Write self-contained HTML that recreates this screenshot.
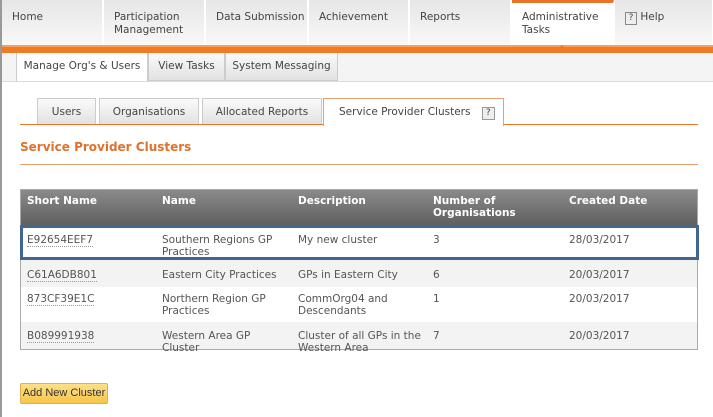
<!DOCTYPE html>
<html><head><style>
*{margin:0;padding:0;box-sizing:border-box}
body{width:713px;height:417px;overflow:hidden;background:#fff;font-family:"DejaVu Sans","Liberation Sans",sans-serif;font-size:10.5px;color:#555;position:relative}
.a{position:absolute}
.nav{top:0;height:45px;background:linear-gradient(#e6e6e6,#f8f8f8);border-right:1px solid #fff}
.nav span{position:absolute;left:10px;top:11px;line-height:13px;color:#444}
.tab{height:28px;background:linear-gradient(#fafafa,#e2e2e2);border:1px solid #ccc;color:#444;text-align:center;line-height:26px}
td,th{text-align:left;vertical-align:top;padding:0 6px}
</style></head><body>
<div class="a" style="left:0;top:0;width:2px;height:417px;background:#999"></div>
<div class="a nav" style="left:2px;width:101px"><span>Home</span></div>
<div class="a nav" style="left:104px;width:101px"><span>Participation<br>Management</span></div>
<div class="a nav" style="left:206px;width:102px"><span>Data Submission</span></div>
<div class="a nav" style="left:309px;width:100px"><span>Achievement</span></div>
<div class="a nav" style="left:410px;width:101px"><span>Reports</span></div>
<div class="a nav" style="left:512px;width:102px;background:#fff;border-top:3px solid #e8752a"><span style="top:8px">Administrative<br>Tasks</span></div>
<div class="a nav" style="left:615px;width:98px"><span style="top:11px"><span style="position:static;display:inline-block;border:1px solid #888;width:12px;height:13px;line-height:11px;text-align:center;font-size:9px">?</span> Help</span></div>
<div class="a" style="left:2px;top:45px;width:711px;height:8px;background:#f07b22;border-top:2px solid #f5a060"></div>
<div class="a" style="left:557px;top:40px;width:0;height:0;border:5px solid transparent;border-bottom-color:#f07b22"></div>
<div class="a" style="left:78px;top:53px;width:0;height:0;border:5px solid transparent;border-top-color:#f07b22"></div>
<div class="a" style="left:2px;top:53px;width:711px;height:29px;background:#f4f4f4;border-bottom:1px solid #ddd"></div>
<div class="a tab" style="left:16px;top:53px;width:132px;background:#fff;border-top:none;border-bottom:none">Manage Org's &amp; Users</div>
<div class="a tab" style="left:148px;top:53px;width:77px;border-top:none">View Tasks</div>
<div class="a tab" style="left:225px;top:53px;width:113px;border-top:none">System Messaging</div>
<div class="a tab" style="left:37px;top:98px;width:59px;height:27px">Users</div>
<div class="a tab" style="left:99px;top:98px;width:100px;height:27px">Organisations</div>
<div class="a tab" style="left:202px;top:98px;width:120px;height:27px">Allocated Reports</div>
<div class="a" style="left:20px;top:124px;width:678px;height:1px;background:#e8752a"></div>
<div class="a" style="left:323px;top:98px;width:181px;height:28px;background:#fff;border:1px solid #e8a070;border-bottom:none;line-height:26px;padding-left:15px;color:#444">Service Provider Clusters <span style="display:inline-block;border:1px solid #999;width:13px;height:13px;line-height:11px;text-align:center;font-size:9px;margin-left:8px;background:#eee">?</span></div>
<div class="a" style="left:20px;top:140px;font-weight:bold;font-size:12px;color:#e0712a">Service Provider Clusters</div>
<div class="a" style="left:20px;top:164px;width:678px;height:1px;background:#e8a070"></div>
<div class="a" style="left:20px;top:189px;width:678px;height:161px;border:1px solid #aaa;background:#fff"></div>
<div class="a" style="left:21px;top:190px;width:676px;height:36px;background:linear-gradient(#8a8a8a,#5e5e5e)"></div>
<div class="a" style="left:21px;top:259px;width:676px;height:28px;background:#f3f3f3"></div>
<div class="a" style="left:21px;top:322px;width:676px;height:27px;background:#f3f3f3"></div>
<div class="a" style="left:20px;top:225px;width:679px;height:35px;border:3px solid #3f6891;background:#fff"></div>
<div class="a" style="left:0;top:195px;width:713px;font-weight:bold;color:#fff;line-height:12px">
<span class="a" style="left:27px">Short Name</span><span class="a" style="left:162px">Name</span><span class="a" style="left:298px">Description</span><span class="a" style="left:433px">Number of<br>Organisations</span><span class="a" style="left:569px">Created Date</span></div>
<div class="a" style="left:0;top:234px;width:713px;line-height:12px">
<span class="a" style="left:27px;border-bottom:1px dotted #999">E92654EEF7</span><span class="a" style="left:162px">Southern Regions GP<br>Practices</span><span class="a" style="left:298px">My new cluster</span><span class="a" style="left:433px">3</span><span class="a" style="left:569px">28/03/2017</span></div>
<div class="a" style="left:0;top:269px;width:713px;line-height:12px">
<span class="a" style="left:27px;border-bottom:1px dotted #999">C61A6DB801</span><span class="a" style="left:162px">Eastern City Practices</span><span class="a" style="left:298px">GPs in Eastern City</span><span class="a" style="left:433px">6</span><span class="a" style="left:569px">20/03/2017</span></div>
<div class="a" style="left:0;top:293px;width:713px;line-height:12px">
<span class="a" style="left:27px;border-bottom:1px dotted #999">873CF39E1C</span><span class="a" style="left:162px">Northern Region GP<br>Practices</span><span class="a" style="left:298px">CommOrg04 and<br>Descendants</span><span class="a" style="left:433px">1</span><span class="a" style="left:569px">20/03/2017</span></div>
<div class="a" style="left:0;top:330px;width:713px;line-height:12px">
<span class="a" style="left:27px;border-bottom:1px dotted #999">B089991938</span><span class="a" style="left:162px">Western Area GP<br>Cluster</span><span class="a" style="left:298px">Cluster of all GPs in the<br>Western Area</span><span class="a" style="left:433px">7</span><span class="a" style="left:569px">20/03/2017</span></div>
<div class="a" style="left:20px;top:383px;width:88px;height:21px;border:1px solid #e0b050;border-radius:2px;background:linear-gradient(#fde08a,#f7c548);font-family:'Liberation Sans',sans-serif;font-size:11px;color:#333;text-align:center;line-height:19px">Add New Cluster</div>
</body></html>
